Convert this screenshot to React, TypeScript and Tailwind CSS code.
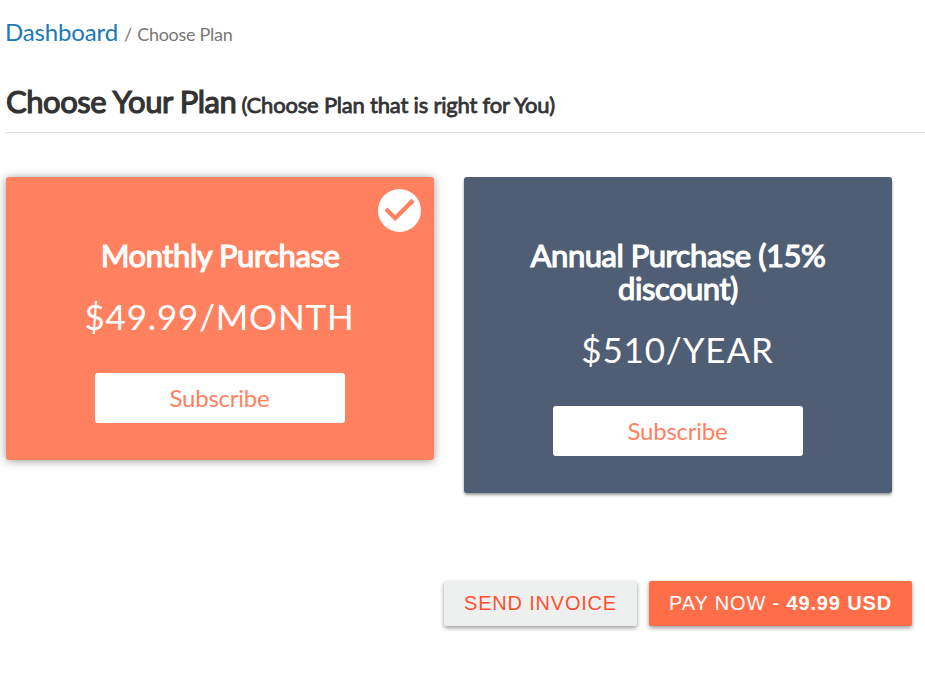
export default function App() {
  return (
    <div className="h-[686px] w-[925px] overflow-hidden bg-white pl-[6px] font-['Lato',sans-serif] text-[#333]">
      <nav className="-ml-px flex h-[66px] items-baseline pt-[15px] leading-[34px]">
        <a className="text-[24px] tracking-[-0.15px] text-[#2079b5]">Dashboard</a>
        <span className="ml-[6px] text-[18px] text-[#777]">/</span>
        <span className="ml-[5px] text-[18px] tracking-[-0.28px] text-[#777]">Choose Plan</span>
      </nav>
      <h1 className="flex h-[67px] items-baseline gap-[5px] border-b border-[#ddd] pt-[15px] leading-[40px] whitespace-nowrap">
        <span className="text-[31px] tracking-[-0.45px] [-webkit-text-stroke:1.2px_#333]">Choose Your Plan</span>
        <small className="text-[22px] tracking-[-0.2px] [-webkit-text-stroke:0.8px_#333]">(Choose Plan that is right for You)</small>
      </h1>
      <main className="mt-[44px] flex items-start gap-[30px]">
        <section className="relative flex h-[283px] w-[428px] flex-col items-center rounded-[3px] bg-[#ff815f] pt-[62px] text-center text-white shadow-[0_1px_10px_rgba(0,0,0,0.4)]">
          <svg className="absolute top-[12px] right-[13px] h-[43px] w-[43px]" viewBox="2 2 20 20">
            <circle cx="12" cy="12" r="10" fill="white" />
            <path d="M10 17l-5-5 1.41-1.41L10 14.17l7.59-7.59L19 8z" fill="#ff815f" />
          </svg>
          <h2 className="text-[31px] leading-[33px] tracking-[-0.43px] [-webkit-text-stroke:1.2px_white]">Monthly Purchase</h2>
          <p className="mt-[19px] pr-px text-[35px] leading-[50px] tracking-[0.82px]">$49.99/MONTH</p>
          <button className="mt-[32px] h-[50px] w-[250px] rounded-[3px] bg-white pr-[1px] text-[24px] tracking-[-0.25px] text-[#ff815f]">Subscribe</button>
        </section>
        <section className="flex h-[316px] w-[428px] flex-col items-center rounded-[3px] bg-[#4f5e75] pt-[62px] text-center text-white shadow-[0_2px_3px_rgba(0,0,0,0.4)]">
          <h2 className="w-[340px] text-[31px] leading-[33px] tracking-[-0.47px] [-webkit-text-stroke:1.2px_white]">Annual Purchase (15% discount)</h2>
          <p className="mt-[19px] pr-px text-[35px] leading-[50px] tracking-[0.85px]">$510/YEAR</p>
          <button className="mt-[32px] h-[50px] w-[250px] rounded-[3px] bg-white pr-[1px] text-[24px] tracking-[-0.25px] text-[#ff815f]">Subscribe</button>
        </section>
      </main>
      <footer className="mt-[88px] flex justify-end gap-[12px] pr-[13px] font-['Liberation_Sans',sans-serif] text-[20px]">
        <button className="h-[45px] w-[193px] rounded-[2px] bg-[#eef0f0] pb-[1px] tracking-[0.8px] text-[#ff5131] shadow-[0_2px_4px_rgba(0,0,0,0.4)]">SEND INVOICE</button>
        <button className="h-[45px] w-[263px] rounded-[2px] bg-[#ff6e48] pb-[1px] tracking-[0.85px] text-white shadow-[0_2px_4px_rgba(0,0,0,0.4)]">PAY NOW - <b>49.99 USD</b></button>
      </footer>
    </div>
  );
}
